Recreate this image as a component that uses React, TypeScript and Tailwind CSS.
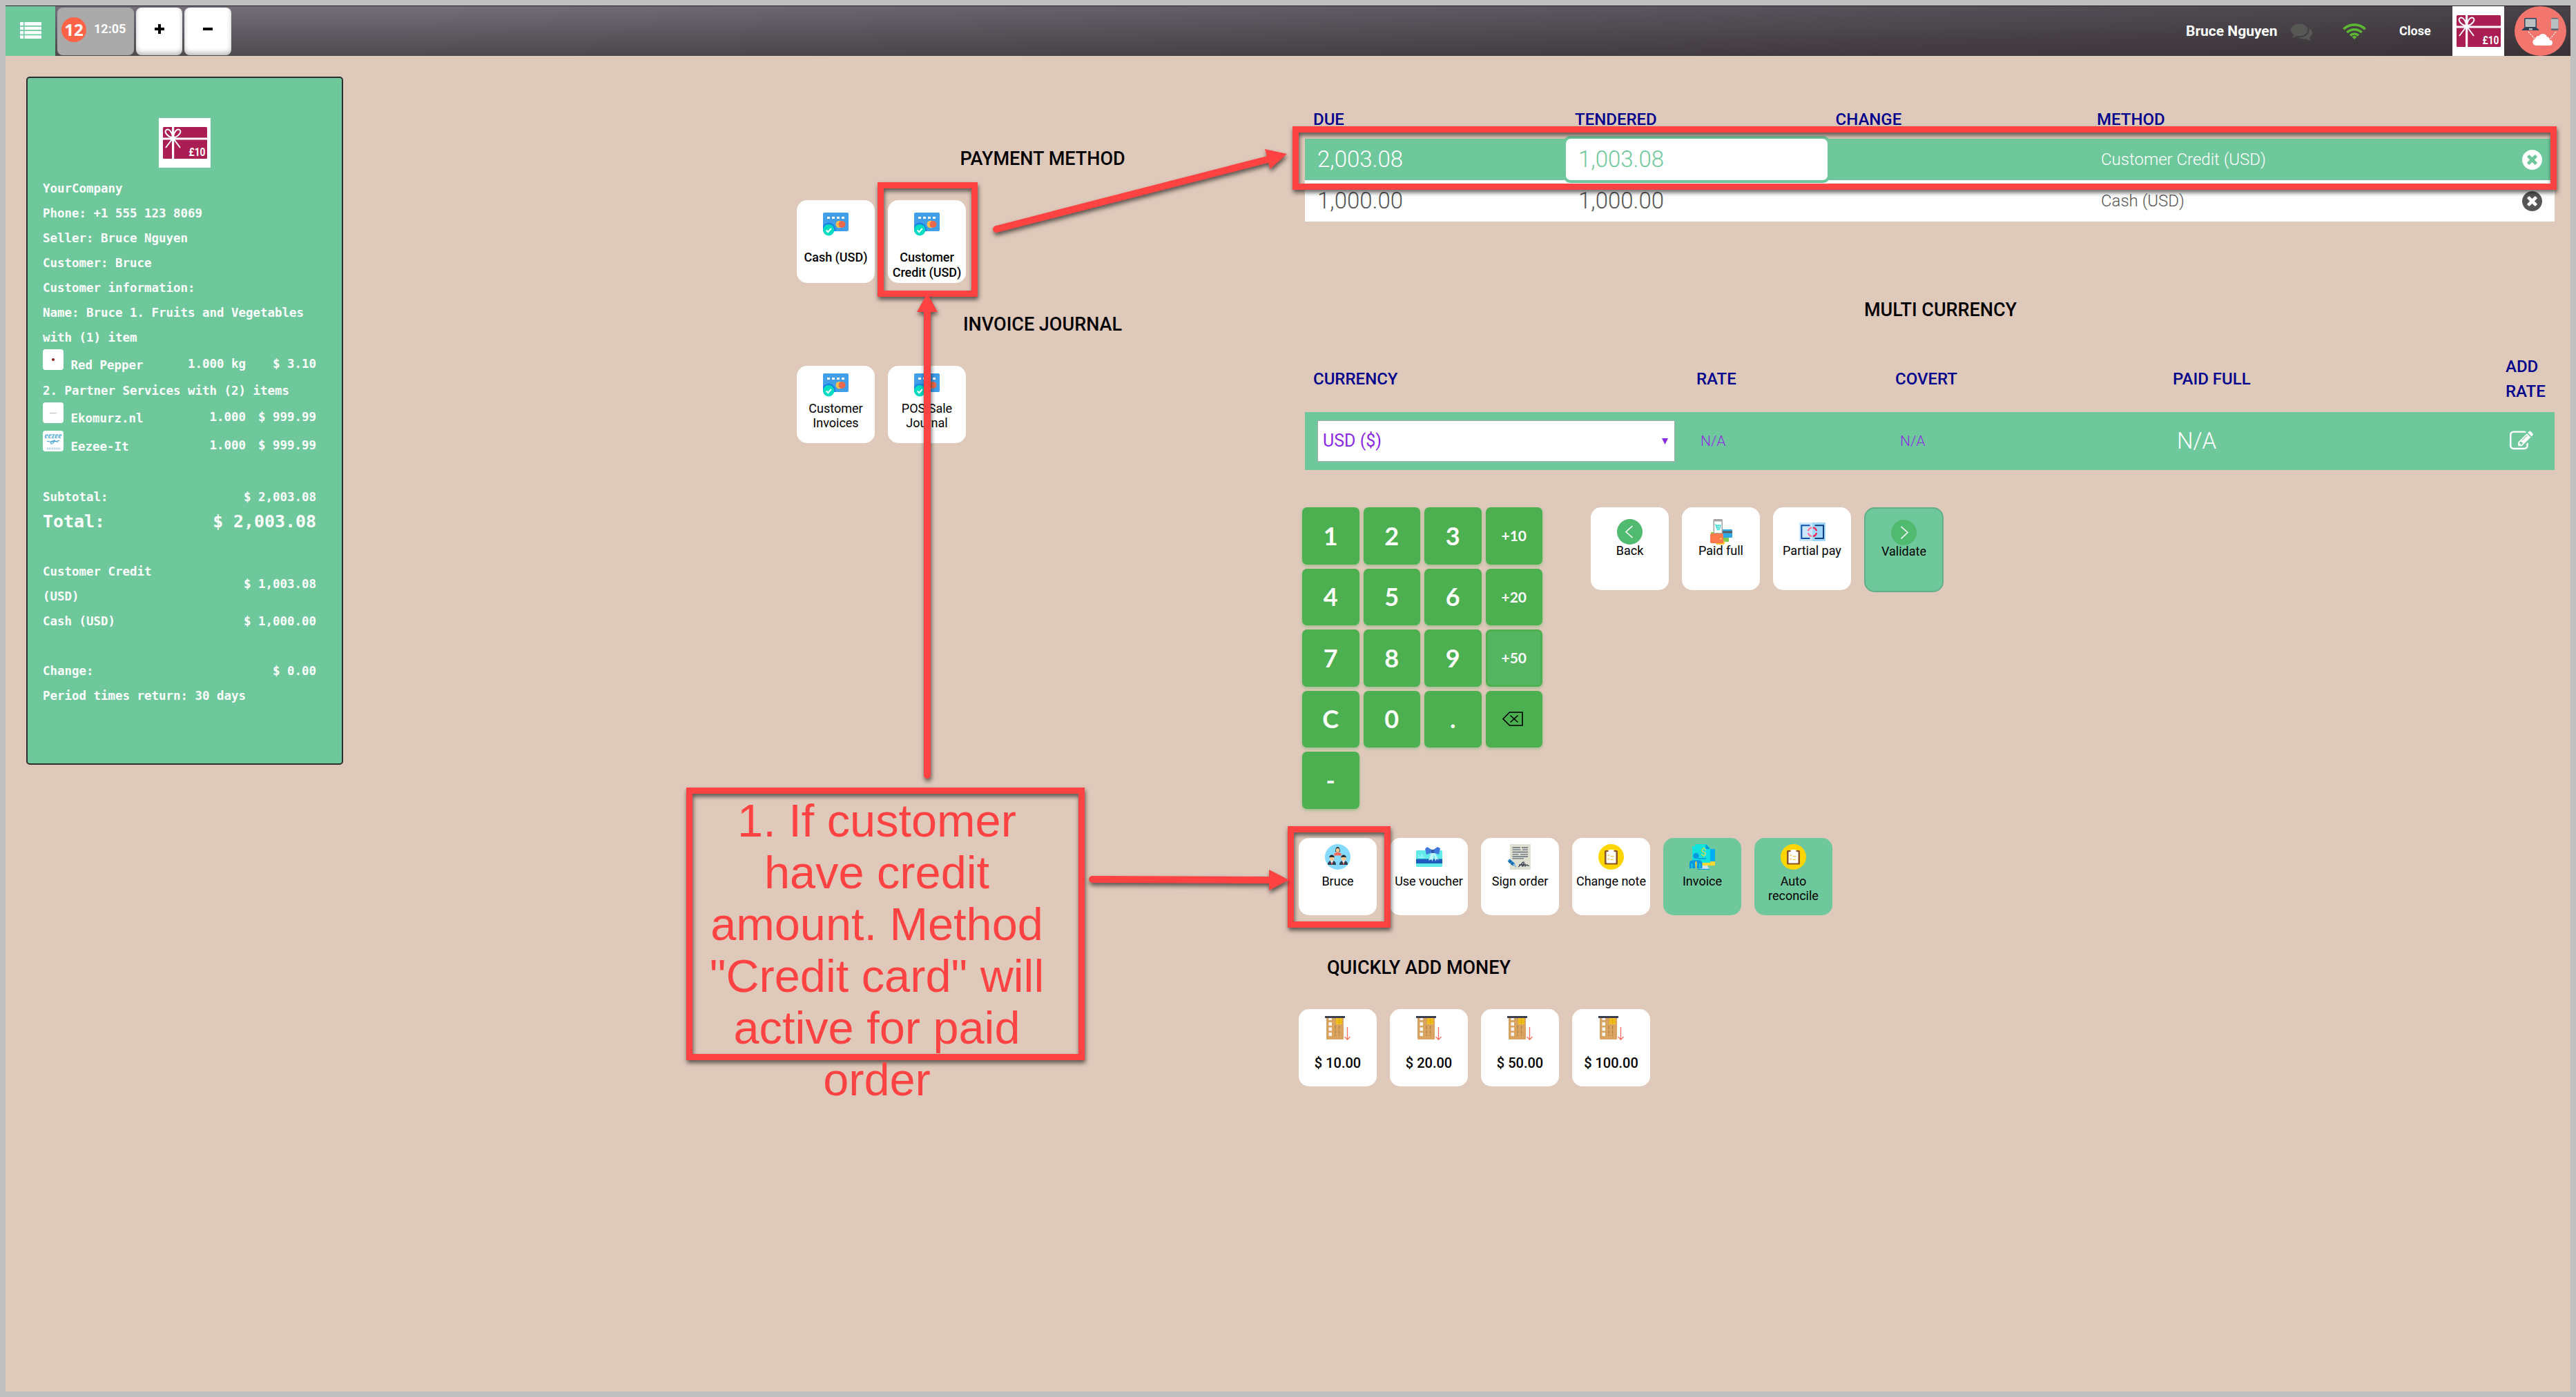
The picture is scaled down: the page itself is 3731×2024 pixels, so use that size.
import React from "react";

const G = "bg-[#6fc89c]";

function GiftLogo({ className }: { className: string }) {
  return (
    <svg viewBox="0 0 75 72" preserveAspectRatio="none" className={className}>
      <rect width="75" height="72" fill="#fff" />
      <rect x="6" y="13" width="64" height="46" rx="1.5" fill="#aa1e53" />
      <rect x="6" y="28.5" width="64" height="3" fill="#fff" />
      <rect x="19" y="13" width="3.2" height="46" fill="#fff" />
      <g fill="none" stroke="#fff" strokeWidth="2">
        <path d="M20.500 29 C10 26 8 19 11 17 C15 15 19 20 20.500 29 C22 20 26 15 30 17 C33 19 31 26 20.500 29" />
        <path d="M20.500 29 L10 43 M20.500 29 L31 43" />
      </g>
      <circle cx="20.500" cy="29.500" r="3.500" fill="#fff" />
      <text x="67.500" y="55" textAnchor="end" fontFamily="Roboto, sans-serif" fontWeight="700" fontSize="16" textLength="24" lengthAdjust="spacingAndGlyphs" fill="#fff">£10</text>
    </svg>
  );
}

function CardIcon() {
  return (
    <svg viewBox="0 0 37 34" className="h-[34px] w-[37px] shrink-0">
      <rect width="37" height="27" rx="2" fill="#419fe9" />
      <g fill="#fff">
        <rect x="6" y="6" width="4" height="3" />
        <rect x="13" y="6" width="4" height="3" />
        <rect x="20" y="6" width="4" height="3" />
        <rect x="27" y="6" width="4" height="3" />
      </g>
      <ellipse cx="23.500" cy="17" rx="5" ry="5.200" fill="#fdbd4a" />
      <circle cx="27.500" cy="17" r="5" fill="#e9694f" />
      <path d="M0 19 A10 10 0 0 1 18 27 H0Z" fill="#1b82e6" />
      <circle cx="8.200" cy="25.300" r="8.200" fill="#02dcc2" />
      <path d="M4.700 25.500l2.600 2.700 4.600-5.200" fill="none" stroke="#fff" strokeWidth="2" />
    </svg>
  );
}

function ChevronIcon({ next }: { next?: boolean }) {
  return (
    <svg viewBox="0 0 37 37" className="size-[37px] shrink-0">
      <circle cx="18.500" cy="18.500" r="18.500" fill="#50ba70" />
      <path d={next ? "M14.500 10l9.500 8.500-9.500 8.800" : "M22.500 10l-9.500 8.500 9.500 8.500"} fill="none" stroke="#fff" strokeWidth="1.600" />
    </svg>
  );
}

function WalletIcon() {
  return (
    <svg viewBox="0 0 32 37" className="h-[37px] w-[32px] shrink-0">
      <rect x="14" y="20" width="13" height="13" rx="1" fill="#7ccb4e" />
      <rect x="1" y="19" width="10" height="6" fill="#8bd14a" />
      <rect x="17" y="15" width="15" height="12" rx="1" fill="#2fa9e4" />
      <rect x="17" y="17.500" width="15" height="2.800" fill="#5b5b5b" />
      <rect x="8" y="31" width="13" height="6" rx="2.500" fill="#fdc62f" />
      <rect x="4.500" y="0" width="13.500" height="23" rx="1.500" fill="#a4a4a4" />
      <rect x="6" y="3.500" width="10.500" height="16.500" fill="#fff" />
      <path d="M6.500 8l1.800.5 1.200 5h4.500l1-4.500H8.700M10 9v4M12 9v4M9.500 15.500h4.500" stroke="#48dfd0" strokeWidth="1.300" fill="none" />
      <rect x="0" y="21" width="19" height="14" rx="1.500" fill="#ff794f" />
      <circle cx="15.500" cy="28.500" r="1.300" fill="#ffd65a" />
    </svg>
  );
}

function PartialIcon() {
  return (
    <svg viewBox="0 0 38 27" className="my-[5px] h-[27px] w-[38px] shrink-0">
      <rect width="19" height="27" fill="#cae7fb" />
      <rect x="19" width="19" height="27" fill="#a0d7f8" />
      <path d="M15.500 4.200H3.300v18.800H15.500" fill="none" stroke="#0c52ab" strokeWidth="2" />
      <path d="M22.500 4.200H35v18.800H22.500" fill="none" stroke="#123f7d" strokeWidth="2" />
      <path d="M18 7.300a6.300 6.300 0 0 0-5 5M13 15a6.300 6.300 0 0 0 5 5" fill="none" stroke="#ff6d94" strokeWidth="2.200" />
      <path d="M20 7.300a6.300 6.300 0 0 1 5 5M25 15a6.300 6.300 0 0 1-5 5" fill="none" stroke="#fb1748" strokeWidth="2.200" />
    </svg>
  );
}

function TeamIcon() {
  const man = (x: number) => (
    <g transform={`translate(${x} 0)`}>
      <path d="M-6 30c0-5 3-6 6-6s6 1 6 6z" fill="#2d4052" />
      <path d="M-2 24h4l-2 6z" fill="#fff" />
      <path d="M0 25l1 4-1 1-1-1z" fill="#ee3f3f" />
      <circle cx="0" cy="20.500" r="3.400" fill="#fdc88e" />
      <path d="M-4 20c0-6 8-6 8 0l-1-1h-6z" fill="#2b2f38" />
    </g>
  );
  return (
    <svg viewBox="0 0 37 37" className="size-[37px] shrink-0">
      <circle cx="18.500" cy="18.500" r="18.500" fill="#84dbff" />
      <path d="M13 16.500c0-4 3-5 5.500-5s5.500 1 5.500 5z" fill="#ff6a5f" />
      <path d="M15 11c0-4 1-7 3.500-7s3.500 3 3.500 7z" fill="#2b3346" />
      <circle cx="18.500" cy="8.800" r="2.700" fill="#fdc88e" />
      {man(10)}
      {man(27)}
    </svg>
  );
}

function VoucherIcon() {
  return (
    <svg viewBox="0 0 38 37" className="h-[37px] w-[38px] shrink-0">
      <rect x="0" y="9" width="38" height="24" rx="1.500" fill="#62eaea" />
      <rect x="0" y="21.500" width="38" height="6.500" fill="#1d5bbd" />
      <path d="M3 16h2M7 16h3M3 19h9" stroke="#c9ffff" strokeWidth="1" />
      <path d="M22 12l-4 12 4-2 2 3 2-10 2 10 2-4 3 3-6-12z" fill="#bff4f8" />
      <path d="M24 9l-8-5-3 3 2 8 9-3 9 3 2-9-4-2z" fill="#4178dc" />
      <rect x="22" y="8" width="4.500" height="5" rx="1" fill="#2c59b8" />
    </svg>
  );
}

function SignIcon() {
  return (
    <svg viewBox="0 0 37 37" className="size-[37px] shrink-0">
      <rect x="4" y="0" width="30" height="37" fill="#dfe0d2" />
      <path d="M7.500 5H19M21 5h9M7.500 8.200h12M22 8.200h8M7.500 11.500H30M7.500 14.800h9M19 14.800h11M7.500 18H30M7.500 20.800H24" stroke="#646b7b" strokeWidth="1.300" />
      <path d="M2 23l8 7" stroke="#2385d0" strokeWidth="4.500" />
      <path d="M5 24l-2 3M8 27l-2 3" stroke="#1b3c66" strokeWidth="1.200" />
      <path d="M9 29l4 4" stroke="#8fb7dd" strokeWidth="2" />
      <path d="M16 33c3-1 6-8 8-7s-4 6-2 6 3-4 4-3-1 3 0 3 2-3 3-2 0 2 3 1M17 30h7" fill="none" stroke="#3c4456" strokeWidth="1.300" />
    </svg>
  );
}

function NoteIcon() {
  return (
    <svg viewBox="0 0 37 37" className="size-[37px] shrink-0">
      <circle cx="18.500" cy="18.500" r="18.500" fill="#ffd500" />
      <rect x="9" y="9" width="19" height="20.500" rx="1.500" fill="#8a5524" />
      <rect x="11.500" y="11" width="14" height="16.500" rx="1" fill="#fff" />
      <rect x="14.500" y="8" width="8" height="4" rx="1" fill="#fff" />
      <path d="M13.500 16l1 1 1.500-2M13.500 21.500l1 1 1.500-2M17.500 17.500h5M17.500 22.500h5" fill="none" stroke="#f5c443" strokeWidth="1.100" />
    </svg>
  );
}

function InvoiceIcon() {
  return (
    <svg viewBox="0 0 37 37" className="size-[37px] shrink-0">
      <rect x="19" y="7" width="18" height="23" fill="#00aef5" />
      <rect x="17" y="25" width="20" height="6" fill="#fdd835" />
      <path d="M4 3h4V0h17l5 6v21H4z" fill="#12e2dd" />
      <path d="M23.500 0L30 7h-6.500z" fill="#0b97dc" />
      <path d="M12 21h12" stroke="#0b97dc" strokeWidth="1.300" />
      <text x="20" y="17" textAnchor="middle" fontFamily="Roboto, sans-serif" fontSize="15" fill="#c7e04a">$</text>
      <path d="M18 31h8l3 6H14z" fill="#cfe3f5" />
      <path d="M12 36.300h17" stroke="#0b97dc" strokeWidth="1.300" />
      <circle cx="9.500" cy="17" r="4.300" fill="#0a98e0" />
      <path d="M0 35V28c0-4 3-5 9.500-5s9 1 9 5v7z" fill="#0a98e0" />
      <path d="M3.500 28v7M15 28v7" stroke="#12e2dd" strokeWidth="1.200" />
      <path d="M9.500 24l1.300 3-.6 8H8.800l-.6-8z" fill="#fdd835" />
    </svg>
  );
}

function MoneyIcon() {
  return (
    <svg viewBox="0 0 37 35" className="h-[35px] w-[37px] shrink-0">
      <rect x="2" y="2" width="25" height="32" rx="1" fill="#d8a45f" />
      <rect x="0" y="0" width="29" height="3" fill="#3c404e" />
      <g fill="#f3f3f3">
        <rect x="5.500" y="3" width="4.500" height="3" />
        <rect x="5.500" y="9" width="4.500" height="5" />
        <rect x="5.500" y="16.500" width="4.500" height="5" />
        <rect x="5.500" y="24" width="4.500" height="5" />
      </g>
      <rect x="16" y="3" width="9" height="9" rx="1.500" fill="#f6c521" />
      <path d="M16 6h4M21 6h4M16 9h9M20.500 3v9" stroke="#dba70f" strokeWidth=".8" />
      <path d="M15 14v15M20.500 14v15" stroke="#a87b43" strokeWidth="1" strokeDasharray="5 1.500" />
      <path d="M32.500 16v18M28.500 30l4 4.300 4-4.300" fill="none" stroke="#f0705f" strokeWidth="1.300" />
    </svg>
  );
}

function CloseIcon({ className }: { className: string }) {
  return (
    <svg viewBox="128 128 1536 1536" className={className} fill="currentColor">
      <path d="M1277 1122q0-26-19-45l-181-181 181-181q19-19 19-45 0-27-19-46l-90-90q-19-19-46-19-26 0-45 19l-181 181-181-181q-19-19-45-19-27 0-46 19l-90 90q-19 19-19 46 0 26 19 45l181 181-181 181q-19 19-19 45 0 27 19 46l90 90q19 19 46 19 26 0 45-19l181-181 181 181q19 19 45 19 27 0 46-19l90-90q19-19 19-46zm387-226q0 209-103 385.500t-279.500 279.500-385.500 103-385.500-103-279.500-279.500-103-385.500 103-385.500 279.500-279.500 385.500-103 385.500 103 279.500 279.500 103 385.500z" />
    </svg>
  );
}

function Header() {
  return (
    <header className="flex h-[73px] shrink-0 items-center border-t border-[#262226] bg-[linear-gradient(to_right,rgba(38,30,34,0)_15%,rgba(38,30,34,0.55)_100%),linear-gradient(to_bottom,#746e7b,#4f4a4e)] font-bold text-white">
      <div className={`flex size-[72px] items-center justify-center ${G}`}>
        <svg viewBox="0 0 31 24" className="mt-[-2px] h-[24px] w-[31px]" fill="#fff">
          <path d="M0 0h5v5H0zM6.500 0H31v5H6.500zM0 6.700h5v4.500H0zM6.500 6.700H31v4.500H6.500zM0 13h5v4.500H0zM6.500 13H31v4.500H6.500zM0 19.300h5v4.700H0zM6.500 19.300H31v4.700H6.500z" />
        </svg>
      </div>
      <div className="ml-[3px] flex h-[69px] w-[111px] items-start rounded-lg bg-[#aaa] pt-[14px] pl-[6px]">
        <div className="flex size-[36px] items-center justify-center rounded-full bg-[#ff6347] font-['Open_Sans',sans-serif] text-[24px] leading-[36px]">12</div>
        <div className="ml-[11px] text-[18px] leading-[34px]">12:05</div>
      </div>
      <div className="ml-[3px] flex h-[69px] w-[67px] items-start justify-center rounded-lg bg-white pt-[24px] shadow-[inset_0_-4px_6px_rgba(0,0,0,0.25)]">
        <svg viewBox="0 0 14 14" className="size-[14px]"><path d="M7 0v14M0 7h14" stroke="#000" strokeWidth="4" /></svg>
      </div>
      <div className="ml-[3px] flex h-[69px] w-[68px] items-start justify-center rounded-lg bg-white pt-[24px] shadow-[inset_0_-4px_6px_rgba(0,0,0,0.25)]">
        <svg viewBox="0 0 14 14" className="size-[14px]"><path d="M0 7h14" stroke="#000" strokeWidth="4" /></svg>
      </div>
      <div className="ml-auto flex items-center">
        <span className="w-[132px] text-[21px] leading-[72px] whitespace-nowrap">Bruce Nguyen</span>
        <svg viewBox="0 0 1792 1792" className="ml-[20px] h-[31px] w-[31px]" fill="#575756">
          <path d="M1408 768q0 139-94 257t-256.500 186.500-353.500 68.500q-86 0-176-16-124 88-278 128-36 9-86 16h-3q-11 0-20.500-8t-11.500-21q-1-3-1-6.500t.500-6.500 2-6l2.500-5 3.500-5.500 4-5 4.500-5 4-4.500q5-6 23-25t26-29.500 22.500-29 25-38.500 20.500-44q-124-72-195-177t-71-224q0-139 94-257t256.500-186.500 353.500-68.500 353.500 68.500 256.500 186.500 94 257zm384 256q0 120-71 224.500t-195 176.500q10 24 20.500 44t25 38.500 22.500 29 26 29.500 23 25q1 1 4 4.500t4.500 5 4 5 3.500 5.500l2.500 5 2 6 .500 6.500-1 6.500q-3 14-13 22t-22 7q-50-7-86-16-154-40-278-128-90 16-176 16-271 0-472-132 58 4 88 4 161 0 309-45t264-129q125-92 192-212t67-254q0-77-23-152 129 71 204 178t75 230z" />
        </svg>
        <svg viewBox="0 0 34 24" className="ml-[44px] h-[24px] w-[34px]" fill="none" stroke="#5cb832" strokeWidth="3.600">
          <path d="M1.300 9.300a22.500 22.500 0 0 1 31.400 0M6.300 14a15.500 15.500 0 0 1 21.400 0M11 18.300a9 9 0 0 1 12 0" />
          <path d="M13.500 20.500a5 5 0 0 1 7 0L17 24z" fill="#5cb832" stroke="none" />
        </svg>
        <span className="ml-[48px] w-[46px] text-[18px] leading-[72px]">Close</span>
        <GiftLogo className="ml-[31px] h-[72px] w-[75px]" />
        <svg viewBox="0 0 75 72" className="ml-[15px] mr-[6px] h-[72px] w-[75px]">
          <ellipse cx="37.500" cy="36" rx="37.500" ry="36" fill="#f2766e" />
          <rect x="14" y="17" width="18" height="14" rx="1.500" fill="#2f4154" />
          <rect x="15.500" y="18.500" width="15" height="11.500" fill="#babfc1" />
          <path d="M14 31h18l4 4H10z" fill="#2f4154" />
          <path d="M21 32h5v2.500h-5z" fill="#babfc1" />
          <rect x="53" y="17" width="10.500" height="18" rx="1.500" fill="#5b6572" />
          <rect x="53" y="18.500" width="10.500" height="14" fill="#babfc1" />
          <path d="M20 37l9 10M60 37l-8 10" stroke="#fff" strokeWidth="1.100" strokeDasharray="2.500 1.300" />
          <path d="M31 57a5 5 0 0 1-1-9.800 4.500 4.500 0 0 1 5.500-4 6.300 6.300 0 0 1 11.500 1 5 5 0 0 1 4 4.800 4 4 0 0 1 0 8z" fill="#fff" />
        </svg>
      </div>
    </header>
  );
}

function SumRow({ label, value }: { label: string; value: string }) {
  return (
    <div className="flex items-center justify-between">
      <span className="w-[200px]">{label}</span>
      <span className="whitespace-pre">{value}</span>
    </div>
  );
}

function Product({ thumb, name, qty, price }: { thumb: React.ReactNode; name: string; qty: string; price: string }) {
  return (
    <div className="flex h-[41px] items-start">
      <div className="mt-[-1px] flex size-[30px] shrink-0 items-center justify-center rounded bg-white">{thumb}</div>
      <span className="ml-[10.500px] pt-[4px]">{name}</span>
      <span className="ml-auto pt-[2px]">{qty}</span>
      <span className="w-[102px] pt-[2px] text-right">{price}</span>
    </div>
  );
}

function Receipt() {
  return (
    <section className={`mt-[30px] ml-[30px] h-[997px] w-[459px] shrink-0 rounded-[5px] border-2 border-[#2d2d2d] ${G} pt-[58px] pr-[37px] pl-[22px] font-['DejaVu_Sans_Mono',monospace] text-[17.440px] leading-[36px] font-bold text-white`}>
      <GiftLogo className="mb-[12px] ml-[168px] h-[72px] w-[75px]" />
      <p>YourCompany</p>
      <p>Phone: +1 555 123 8069</p>
      <p>Seller: Bruce Nguyen</p>
      <p>Customer: Bruce</p>
      <p>Customer information:</p>
      <p>Name: Bruce 1. Fruits and Vegetables with (1) item</p>
      <Product name="Red Pepper" qty="1.000 kg" price="$ 3.10" thumb={<span className="size-[4px] rounded-sm bg-[#8e1f1f]" />} />
      <p>2. Partner Services with (2) items</p>
      <Product name="Ekomurz.nl" qty="1.000" price="$ 999.99" thumb={<span className="h-px w-[10px] bg-[#b9bcc0]" />} />
      <Product
        name="Eezee-It"
        qty="1.000"
        price="$ 999.99"
        thumb={
          <svg viewBox="0 0 30 30" className="size-[30px] overflow-visible">
            <text x="15" y="11" textAnchor="middle" textLength="25" lengthAdjust="spacingAndGlyphs" fontFamily="Liberation Serif, serif" fontStyle="italic" fontWeight="700" fontSize="12" fill="#56aed8">eezee</text>
            <path d="M6 15c4 2 14 1 18-1M17 13c-1 8-8 7-5 3s8 1 10 0" fill="none" stroke="#4aa5d3" strokeWidth="1.200" />
            <path d="M6 26h19" stroke="#a9d2e8" strokeWidth="3" strokeDasharray="1.500 1" />
          </svg>
        }
      />
      <div className="pt-[36px]">
        <SumRow label="Subtotal:" value="$ 2,003.08" />
        <div className="text-[24.900px]">
          <SumRow label="Total:" value="$ 2,003.08" />
        </div>
      </div>
      <div className="pt-[36px]">
        <SumRow label="Customer Credit (USD)" value="$ 1,003.08" />
        <SumRow label="Cash (USD)" value="$ 1,000.00" />
      </div>
      <div className="pt-[36px]">
        <SumRow label="Change:" value="$ 0.00" />
        <p>Period times return: 30 days</p>
      </div>
    </section>
  );
}

function Tile({ icon, label, className }: { icon: React.ReactNode; label: string; className: string }) {
  return (
    <div className={`flex w-[113px] shrink-0 flex-col items-center overflow-hidden rounded-[15px] text-center text-black ${className}`}>
      {icon}
      <span className="w-full whitespace-pre-line">{label}</span>
    </div>
  );
}

const heading = "text-[27px] font-medium leading-[36px] text-black whitespace-nowrap";
const payTile = "h-[120px] bg-white pt-[18px] gap-[20px] text-[18px] leading-[22px] font-medium";
const journalTile = "h-[112px] bg-white pt-[11px] gap-[6px] text-[18px] leading-[21px]";
const actionTile = "h-[120px] bg-white pt-[17px] text-[18px] leading-[18px]";
const optionTile = "h-[112px] pt-[9px] gap-[6px] text-[18px] leading-[21px]";
const moneyTile = "h-[112px] bg-white pt-[10px] gap-[22px] text-[20px] leading-[22px] font-medium";

function Methods() {
  return (
    <section className="mt-[131px] ml-[657px] w-[712px] shrink-0">
      <h2 className={`text-center ${heading}`}>PAYMENT METHOD</h2>
      <div className="mt-[42px] flex gap-[19px]">
        <Tile icon={<CardIcon />} label="Cash (USD)" className={payTile} />
        <Tile icon={<CardIcon />} label={"Customer\nCredit (USD)"} className={payTile} />
      </div>
      <h2 className={`mt-[42px] text-center ${heading}`}>INVOICE JOURNAL</h2>
      <div className="mt-[42px] flex gap-[19px]">
        <Tile icon={<CardIcon />} label={"Customer\nInvoices"} className={journalTile} />
        <Tile icon={<CardIcon />} label={"POS Sale\nJournal"} className={journalTile} />
      </div>
    </section>
  );
}

const keys = ["1", "2", "3", "+10", "4", "5", "6", "+20", "7", "8", "9", "+50", "C", "0", ".", "back", "-"];

function Keypad() {
  return (
    <div className="ml-[5px] grid w-[348px] grid-cols-4 gap-[6px] font-['Lato',sans-serif] font-bold text-white">
      {keys.map((k) => (
        <div
          key={k}
          className={`flex h-[82.500px] items-center justify-center rounded-[7px] pb-px shadow-[0_2px_4px_rgba(76,175,80,0.45)] ${k === "+50" ? "border-[3px] border-[#4caf50] bg-[#55b561]" : "bg-[#4caf50]"} ${k.length === 3 ? "text-[21px]" : "text-[36px]"}`}
        >
          {k === "back" ? (
            <svg viewBox="0 0 30 21" className="mr-[3px] h-[21px] w-[30px]" fill="none" stroke="#000" strokeWidth="1.600">
              <path d="M1 10.500L10.500 1H29v19H10.500zM11.500 5.500l11 10M22.500 5.500l-11 10" />
            </svg>
          ) : (
            k
          )}
        </div>
      ))}
    </div>
  );
}

function PaymentLine({ due, tendered, method, active }: { due: string; tendered: string; method: string; active?: boolean }) {
  return (
    <div className={`grid h-[60px] grid-cols-[378px_378.500px_378.500px_1fr_72px] items-center text-[33px] font-light ${active ? `${G} text-white` : "bg-white text-[#555]"}`}>
      <span className="pl-[18px]">{due}</span>
      <span className={active ? "relative z-10 h-[60px] rounded-[7px] bg-white pl-[18px] leading-[60px] text-[#6fc89c] shadow-[0_0_0_4px_#6fc89c]" : "pl-[18px]"}>{tendered}</span>
      <span />
      <span className="pl-[18px] text-[24px]">{method}</span>
      <CloseIcon className="ml-[25px] size-[29px]" />
    </div>
  );
}

const th = "text-[24px] font-medium text-[#00008b]";

function Payment() {
  return (
    <section className="mt-[72px] ml-[15px] w-[1819px] shrink-0">
      <div className="pl-[9px]">
        <div className={`mb-[12px] grid h-[36px] grid-cols-[379px_377.500px_378.500px_1fr] items-center pt-[2px] pl-[12px] ${th}`}>
          <span>DUE</span>
          <span>TENDERED</span>
          <span>CHANGE</span>
          <span>METHOD</span>
        </div>
        <PaymentLine active due="2,003.08" tendered="1,003.08" method="Customer Credit (USD)" />
        <PaymentLine due="1,000.00" tendered="1,000.00" method="Cash (USD)" />
        <h2 className={`mt-[110px] pl-[31px] text-center ${heading}`}>MULTI CURRENCY</h2>
        <div className={`mt-[46px] grid h-[72px] grid-cols-[555px_288px_402px_482px_1fr] items-center pl-[12px] leading-[36px] ${th}`}>
          <span>CURRENCY</span>
          <span>RATE</span>
          <span>COVERT</span>
          <span>PAID FULL</span>
          <span className="w-[62px]">ADD RATE</span>
        </div>
        <div className={`mt-[12px] grid h-[84px] grid-cols-[555px_289px_401px_482px_1fr] items-center pl-[18px] ${G}`}>
          <div className="flex h-[60px] w-[518px] items-center justify-between border border-[#a9a9a9] bg-white pr-[9px] pl-[7px] text-[25px] text-[#8a2be2]">
            USD ($)
            <svg viewBox="0 0 9 9" className="size-[9px]" fill="#8a2be2"><path d="M0 0h9L4.500 9z" /></svg>
          </div>
          <span className="pt-[2px] text-[21px] font-light text-[#8a2be2]">N/A</span>
          <span className="pt-[2px] text-[21px] font-light text-[#8a2be2]">N/A</span>
          <span className="text-[33px] font-light text-white">N/A</span>
          <svg viewBox="0 0 1792 1792" className="size-[34px]" fill="#fff">
            <path d="M888 1184l116-116-152-152-116 116v56h96v96h56zm440-720q-16-16-33 1l-350 350q-17 17-1 33t33-1l350-350q17-17 1-33zm80 594v190q0 119-84.500 203.500t-203.500 84.500h-832q-119 0-203.500-84.500t-84.500-203.500v-832q0-119 84.500-203.500t203.500-84.500h832q63 0 117 25 15 7 18 23 3 17-9 29l-49 49q-14 14-32 8-23-6-45-6h-832q-66 0-113 47t-47 113v832q0 66 47 113t113 47h832q66 0 113-47t47-113v-126q0-13 9-22l64-64q15-15 35-7t20 29zm-96-738l288 288-672 672h-288v-288zm444 132l-92 92-288-288 92-92q28-28 68-28t68 28l152 152q28 28 28 68t-28 68z" />
          </svg>
        </div>
      </div>
      <div className="mt-[54px] flex items-start">
        <Keypad />
        <div className="ml-[70px] flex gap-[19px]">
          <Tile icon={<ChevronIcon />} label="Back" className={actionTile} />
          <Tile icon={<WalletIcon />} label="Paid full" className={actionTile} />
          <Tile icon={<PartialIcon />} label="Partial pay" className={actionTile} />
          <div className={`flex h-[123px] w-[115px] shrink-0 flex-col items-center rounded-[15px] border-2 border-[#61ae88] ${G} pt-[16px] text-[18px] leading-[18px] text-black`}>
            <ChevronIcon next />
            <span>Validate</span>
          </div>
        </div>
      </div>
      <div className="mt-[42.500px] flex gap-[19px]">
        <Tile icon={<TeamIcon />} label="Bruce" className={`bg-white ${optionTile}`} />
        <Tile icon={<VoucherIcon />} label="Use voucher" className={`bg-white ${optionTile}`} />
        <Tile icon={<SignIcon />} label="Sign order" className={`bg-white ${optionTile}`} />
        <Tile icon={<NoteIcon />} label="Change note" className={`bg-white ${optionTile}`} />
        <Tile icon={<InvoiceIcon />} label="Invoice" className={`${G} ${optionTile}`} />
        <Tile icon={<NoteIcon />} label={"Auto\nreconcile"} className={`${G} ${optionTile}`} />
      </div>
      <h2 className={`mt-[58px] ml-[41px] ${heading}`}>QUICKLY ADD MONEY</h2>
      <div className="mt-[42px] flex gap-[19px]">
        {["$ 10.00", "$ 20.00", "$ 50.00", "$ 100.00"].map((v) => (
          <Tile key={v} icon={<MoneyIcon />} label={v} className={moneyTile} />
        ))}
      </div>
    </section>
  );
}

const frame = "absolute z-20 border-[9px] border-[#ff4343] drop-shadow-[1px_4px_3px_rgba(0,0,0,0.6)]";

function Annotations() {
  return (
    <>
      <div className={`${frame} top-[264px] left-[1271px] h-[166px] w-[145px]`} />
      <div className={`${frame} top-[183px] left-[1872px] h-[92px] w-[1831px]`} />
      <div className={`${frame} top-[1197px] left-[1865px] h-[147px] w-[149px]`} />
      <div className={`${frame} top-[1141px] left-[994px] h-[395px] w-[577px]`} />
      <p className="absolute top-[1152px] left-[1010px] z-20 w-[520px] text-center font-['Liberation_Sans',sans-serif] text-[66.670px] leading-[75px] whitespace-pre-line text-[#ff4343]">
        {'1. If customer\nhave credit\namount. Method\n"Credit card" will\nactive for paid\norder'}
      </p>
      <svg viewBox="0 0 900 1140" className="absolute top-[200px] left-[1000px] z-20 h-[1140px] w-[900px] drop-shadow-[1px_4px_3px_rgba(0,0,0,0.6)]" fill="#ff4343" stroke="#ff4343">
        <g strokeWidth="10" strokeLinecap="round">
          <path d="M443 132L840 30" />
          <path d="M343 923V245" />
          <path d="M582 1074L840 1075" />
        </g>
        <g stroke="none">
          <path d="M864 23L839.500 45L832 16z" />
          <path d="M343 225l15 27h-30z" />
          <path d="M867 1075l-29 15v-30z" />
        </g>
      </svg>
    </>
  );
}

export default function App() {
  return (
    <div className="relative h-[2024px] w-[3731px] overflow-hidden font-['Roboto',sans-serif]">
      <div className="flex h-full w-full flex-col border-8 border-[#c0c0c0] bg-[#dfc9bb]">
        <Header />
        <main className="flex items-start">
          <Receipt />
          <Methods />
          <Payment />
        </main>
      </div>
      <Annotations />
    </div>
  );
}
